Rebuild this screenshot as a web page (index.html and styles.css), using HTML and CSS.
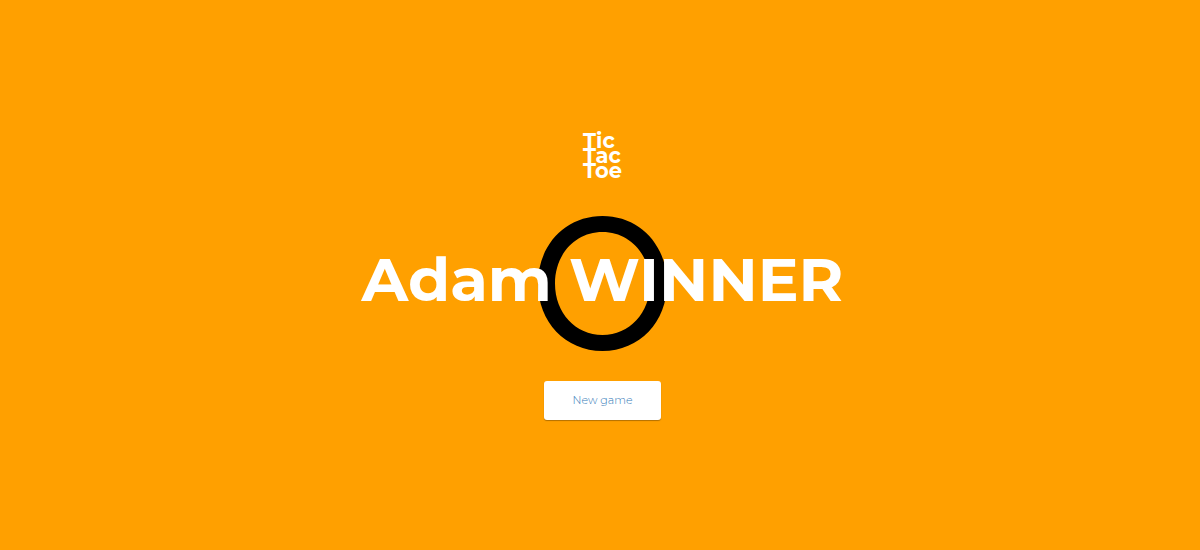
FILE: index.html
```html
<!DOCTYPE html>
<html lang="en">
<head>
<meta charset="utf-8">
<meta name="viewport" content="width=device-width, initial-scale=1">
<title>Tic Tac Toe</title>
<link rel="stylesheet" href="styles.css">
</head>
<body>
<main class="screen">
  <p class="logo"><span>Tic</span><span>Tac</span><span>Toe</span></p>
  <div class="result">
    <svg class="mark" viewBox="0 0 129 135" aria-hidden="true">
      <path fill-rule="evenodd" d="M64.500 0C101.500 0 129 29 129 67.500S101.500 135 64.500 135S0 106 0 67.500S27.500 0 64.500 0ZM64.500 16C37.500 16 17 38 17 67.500S37.500 119 64.500 119S112 97 112 67.500S91.500 16 64.500 16Z"/>
    </svg>
    <h1 class="winner">Adam WINNER</h1>
  </div>
  <button class="new-game" type="button">New game</button>
</main>
</body>
</html>
```
FILE: styles.css
```css
* {
  box-sizing: border-box;
}

body {
  margin: 0;
  background: #ffa000;
  color: #fff;
  font-family: Montserrat, Inter, "Open Sans", sans-serif;
}

.screen {
  min-height: 100vh;
  padding: 3px 0 0 5px;
  display: flex;
  flex-direction: column;
  align-items: center;
  justify-content: center;
}

.logo {
  display: flex;
  flex-direction: column;
  margin: 0 0 38px;
  font-size: 21px;
  font-weight: 700;
  line-height: 15px;
}

.result {
  display: grid;
  place-items: center;
  margin-bottom: 30px;
}

.mark,
.winner {
  grid-area: 1 / 1;
}

.mark {
  width: 129px;
  fill: #000;
}

.winner {
  z-index: 1;
  margin: 0;
  padding-bottom: 8px;
  font-size: 61px;
  font-weight: 700;
  line-height: 1;
  text-align: center;
}

.new-game {
  padding: 10px 29px;
  border: 0;
  border-radius: 3px;
  background: #fff;
  box-shadow: 0 1px 1px rgba(0, 0, 0, 0.3);
  color: #337ab7;
  font: 300 11px/19px Montserrat, Inter, "Open Sans", sans-serif;
  cursor: pointer;
}
```
